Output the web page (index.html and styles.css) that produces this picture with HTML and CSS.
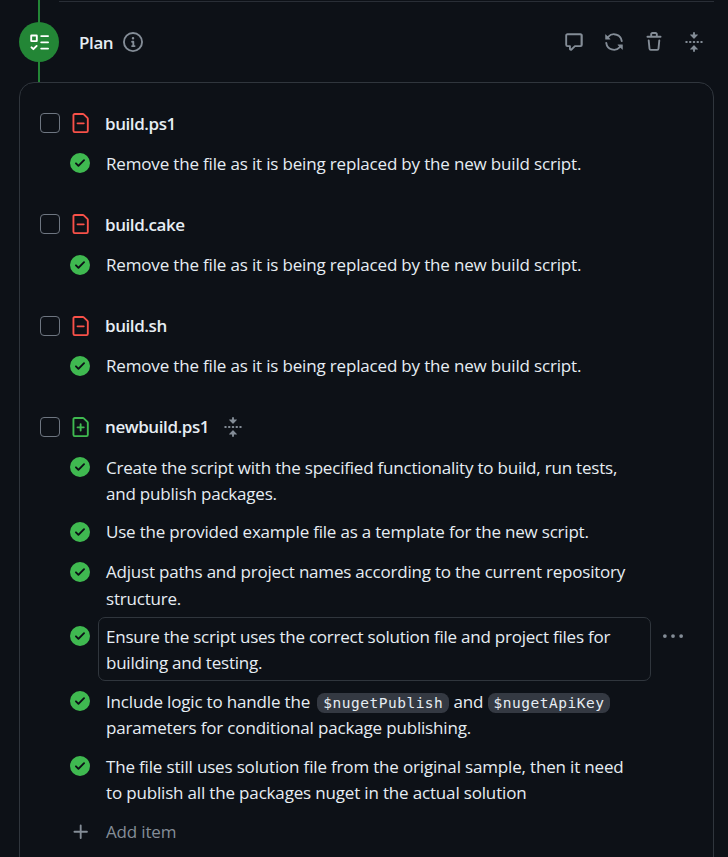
FILE: index.html
```html
<!DOCTYPE html>
<html lang="en">
<head>
<meta charset="utf-8">
<title>Plan</title>
<link rel="stylesheet" href="styles.css">
</head>
<body>
<svg class="sprite" aria-hidden="true">
  <symbol id="tasklist" viewBox="0 0 16 16"><path d="M2 2h4a1 1 0 0 1 1 1v4a1 1 0 0 1-1 1H2a1 1 0 0 1-1-1V3a1 1 0 0 1 1-1Zm4.655 8.595a.75.75 0 0 1 0 1.06L4.03 14.28a.75.75 0 0 1-1.06 0l-1.5-1.5a.749.749 0 0 1 .326-1.275.749.749 0 0 1 .734.215l.97.97 2.095-2.095a.75.75 0 0 1 1.06 0ZM9.75 2.5h5.5a.75.75 0 0 1 0 1.5h-5.5a.75.75 0 0 1 0-1.5Zm0 5h5.5a.75.75 0 0 1 0 1.5h-5.5a.75.75 0 0 1 0-1.5Zm0 5h5.5a.75.75 0 0 1 0 1.5h-5.5a.75.75 0 0 1 0-1.5Zm-7.25-9v3h3v-3Z"/></symbol>
  <symbol id="info" viewBox="0 0 16 16"><path d="M0 8a8 8 0 1 1 16 0A8 8 0 0 1 0 8Zm8-6.5a6.5 6.5 0 1 0 0 13 6.5 6.5 0 0 0 0-13ZM6.5 7.75A.75.75 0 0 1 7.25 7h1a.75.75 0 0 1 .75.75v2.75h.25a.75.75 0 0 1 0 1.5h-2a.75.75 0 0 1 0-1.5h.25v-2h-.25a.75.75 0 0 1-.75-.75ZM8 6a1 1 0 1 1 0-2 1 1 0 0 1 0 2Z"/></symbol>
  <symbol id="comment" viewBox="0 0 16 16"><path d="M1 2.75C1 1.784 1.784 1 2.75 1h10.5c.966 0 1.75.784 1.75 1.75v7.5A1.75 1.75 0 0 1 13.25 12H9.06l-2.573 2.573A1.458 1.458 0 0 1 4 13.543V12H2.75A1.75 1.75 0 0 1 1 10.25Zm1.75-.25a.25.25 0 0 0-.25.25v7.5c0 .138.112.25.25.25h2a.75.75 0 0 1 .75.75v2.19l2.72-2.72a.749.749 0 0 1 .53-.22h4.25a.25.25 0 0 0 .25-.25v-7.5a.25.25 0 0 0-.25-.25Z"/></symbol>
  <symbol id="sync" viewBox="0 0 16 16"><path d="M1.705 8.005a.75.75 0 0 1 .834.656 5.5 5.5 0 0 0 9.592 2.97l-1.204-1.204a.25.25 0 0 1 .177-.427h3.646a.25.25 0 0 1 .25.25v3.646a.25.25 0 0 1-.427.177l-1.38-1.38A7.002 7.002 0 0 1 1.05 8.84a.75.75 0 0 1 .656-.834ZM8 2.5a5.487 5.487 0 0 0-4.131 1.869l1.204 1.204A.25.25 0 0 1 4.896 6H1.25A.25.25 0 0 1 1 5.75V2.104a.25.25 0 0 1 .427-.177l1.38 1.38A7.002 7.002 0 0 1 14.95 7.16a.75.75 0 0 1-1.49.178A5.5 5.5 0 0 0 8 2.5Z"/></symbol>
  <symbol id="trash" viewBox="0 0 16 16"><path d="M11 1.75V3h2.25a.75.75 0 0 1 0 1.5H2.75a.75.75 0 0 1 0-1.5H5V1.75C5 .784 5.784 0 6.75 0h2.5C10.216 0 11 .784 11 1.75ZM4.496 6.675l.66 6.6a.25.25 0 0 0 .249.225h5.19a.25.25 0 0 0 .249-.225l.66-6.6a.75.75 0 0 1 1.492.149l-.66 6.6A1.748 1.748 0 0 1 10.595 15h-5.19a1.75 1.75 0 0 1-1.741-1.575l-.66-6.6a.75.75 0 1 1 1.492-.15ZM6.5 1.75V3h3V1.75a.25.25 0 0 0-.25-.25h-2.5a.25.25 0 0 0-.25.25Z"/></symbol>
  <symbol id="fold" viewBox="0 0 16 16"><path d="M10.896 2H8.75V.75a.75.75 0 0 0-1.5 0V2H5.104a.25.25 0 0 0-.177.427l2.896 2.896a.25.25 0 0 0 .354 0l2.896-2.896A.25.25 0 0 0 10.896 2ZM8.75 15.25a.75.75 0 0 1-1.5 0V14H5.104a.25.25 0 0 1-.177-.427l2.896-2.896a.25.25 0 0 1 .354 0l2.896 2.896a.25.25 0 0 1-.177.427H8.75v1.25Zm-6.5-6.5a.75.75 0 0 0 0-1.5h-.5a.75.75 0 0 0 0 1.5h.5ZM6 8a.75.75 0 0 1-.75.75h-.5a.75.75 0 0 1 0-1.5h.5A.75.75 0 0 1 6 8Zm2.25.75a.75.75 0 0 0 0-1.5h-.5a.75.75 0 0 0 0 1.5h.5ZM12 8a.75.75 0 0 1-.75.75h-.5a.75.75 0 0 1 0-1.5h.5A.75.75 0 0 1 12 8Zm2.25.75a.75.75 0 0 0 0-1.5h-.5a.75.75 0 0 0 0 1.5h.5Z"/></symbol>
  <symbol id="done" viewBox="0 0 16 16"><path d="M8 16A8 8 0 1 1 8 0a8 8 0 0 1 0 16Zm3.78-9.72a.751.751 0 0 0-.018-1.042.751.751 0 0 0-1.042-.018L6.75 9.19 5.28 7.72a.751.751 0 0 0-1.042.018.751.751 0 0 0-.018 1.042l2 2a.75.75 0 0 0 1.06 0Z"/></symbol>
  <symbol id="sheet" viewBox="0 0 16 16"><path d="M2 1.75C2 .784 2.784 0 3.75 0h6.586c.464 0 .909.184 1.237.513l2.914 2.914c.329.328.513.773.513 1.237v9.586A1.75 1.75 0 0 1 13.25 16h-9.5A1.75 1.75 0 0 1 2 14.25Zm1.75-.25a.25.25 0 0 0-.25.25v12.5c0 .138.112.25.25.25h9.5a.25.25 0 0 0 .25-.25V4.664a.25.25 0 0 0-.073-.177l-2.914-2.914a.25.25 0 0 0-.177-.073Z"/></symbol>
  <symbol id="removed" viewBox="0 0 16 16"><use href="#sheet"/><path d="M6 8.25h5" fill="none" stroke="currentColor" stroke-width="1.5" stroke-linecap="round"/></symbol>
  <symbol id="added" viewBox="0 0 16 16"><use href="#sheet"/><path d="M6 8.25h5M8.5 5.75v5" fill="none" stroke="currentColor" stroke-width="1.5" stroke-linecap="round"/></symbol>
  <symbol id="plus" viewBox="0 0 16 16"><path d="M7.75 2a.75.75 0 0 1 .75.75V7h4.25a.75.75 0 0 1 0 1.5H8.5v4.25a.75.75 0 0 1-1.5 0V8.5H2.75a.75.75 0 0 1 0-1.5H7V2.75A.75.75 0 0 1 7.75 2Z"/></symbol>
  <symbol id="dots" viewBox="0 0 16 16"><circle cx="1.5" cy="8" r="1.5"/><circle cx="8" cy="8" r="1.5"/><circle cx="14.5" cy="8" r="1.5"/></symbol>
</svg>

<div class="divider"></div>
<header class="head">
  <div class="rail"><span class="badge"><svg class="icon"><use href="#tasklist"/></svg></span></div>
  <h2 class="title">Plan</h2>
  <svg class="icon muted"><use href="#info"/></svg>
  <div class="actions">
    <svg class="icon"><use href="#comment"/></svg>
    <svg class="icon"><use href="#sync"/></svg>
    <svg class="icon"><use href="#trash"/></svg>
    <svg class="icon"><use href="#fold"/></svg>
  </div>
</header>

<main class="card">
  <section class="group">
    <div class="file"><span class="box"></span><svg class="icon red"><use href="#removed"/></svg><h3>build.ps1</h3></div>
    <div class="item"><svg class="icon green"><use href="#done"/></svg><p>Remove the file as it is being replaced by the new build script.</p></div>
  </section>
  <section class="group">
    <div class="file"><span class="box"></span><svg class="icon red"><use href="#removed"/></svg><h3>build.cake</h3></div>
    <div class="item"><svg class="icon green"><use href="#done"/></svg><p>Remove the file as it is being replaced by the new build script.</p></div>
  </section>
  <section class="group">
    <div class="file"><span class="box"></span><svg class="icon red"><use href="#removed"/></svg><h3>build.sh</h3></div>
    <div class="item"><svg class="icon green"><use href="#done"/></svg><p>Remove the file as it is being replaced by the new build script.</p></div>
  </section>
  <section class="group">
    <div class="file"><span class="box"></span><svg class="icon green"><use href="#added"/></svg><h3>newbuild.ps1</h3><svg class="icon muted"><use href="#fold"/></svg></div>
    <div class="item tight"><svg class="icon green"><use href="#done"/></svg><p>Create the script with the specified functionality to build, run tests,<br>and publish packages.</p></div>
    <div class="item tight"><svg class="icon green"><use href="#done"/></svg><p>Use the provided example file as a template for the new script.</p></div>
    <div class="item tight"><svg class="icon green"><use href="#done"/></svg><p>Adjust paths and project names according to the current repository<br>structure.</p></div>
    <div class="item tight active"><svg class="icon green"><use href="#done"/></svg><p>Ensure the script uses the correct solution file and project files for<br>building and testing.</p><svg class="icon muted more"><use href="#dots"/></svg></div>
    <div class="item coded"><svg class="icon green"><use href="#done"/></svg><p>Include logic to handle the <code class="first">$nugetPublish</code> and <code>$nugetApiKey</code><br>parameters for conditional package publishing.</p></div>
    <div class="item"><svg class="icon green"><use href="#done"/></svg><p>The file still uses solution file from the original sample, then it need<br>to publish all the packages nuget in the actual solution</p></div>
    <div class="item add"><svg class="icon"><use href="#plus"/></svg><p>Add item</p></div>
  </section>
</main>
</body>
</html>
```
FILE: styles.css
```css
* { box-sizing: border-box; }
html { background: #0d1117; }
body {
  margin: 0;
  height: 857px;
  overflow: hidden;
  display: flex;
  flex-direction: column;
  background: #0d1117;
  color: #e6edf3;
  font-family: "Open Sans", "Noto Sans", sans-serif;
  font-size: 17px;
  line-height: 26.25px;
  letter-spacing: -0.17px;
}
h2, h3, p { margin: 0; }
.sprite { position: absolute; width: 0; height: 0; }
.icon { width: 20px; height: 20px; flex: none; fill: currentColor; overflow: visible; }
.muted { color: #848d97; }
.red { color: #f85149; }
.green { color: #3fb950; }

.divider { flex: none; height: 2px; margin: 0 14px 0 59px; border-bottom: 1px solid #292e36; }
.head {
  flex: none;
  height: 82px;
  margin-top: -2px;
  padding: 2px 24px 0 19px;
  display: flex;
  align-items: center;
}
.rail {
  width: 40px;
  height: 82px;
  margin: -2px 20px 0 0;
  display: flex;
  align-items: center;
  justify-content: center;
  background: linear-gradient(#238636, #238636) 19px 0 / 2px 100% no-repeat;
}
.badge {
  width: 40px;
  height: 40px;
  margin-top: 2px;
  border-radius: 50%;
  background: #238636;
  color: #fff;
  display: flex;
  align-items: center;
  justify-content: center;
}
.title { font-size: 17px; font-weight: 600; margin: 2px 10px 0 0; letter-spacing: -0.4px; }
.actions { margin-left: auto; display: flex; gap: 20px; color: #848d97; }

.card {
  flex: none;
  height: 800px;
  margin: 0 14px 0 19px;
  padding: 19.9px 0 0 20px;
  border: 1px solid #30363d;
  border-radius: 15px;
}
.group { margin-bottom: 20.75px; }
.file { height: 40.5px; display: flex; align-items: center; }
.file h3 { font-size: 17px; font-weight: 600; margin: 1px 14px 0 15px; letter-spacing: -0.42px; }
.box { width: 20px; height: 20px; margin-right: 10px; border: 1px solid #6e7681; border-radius: 4px; }
.item { min-height: 40px; padding-left: 30px; display: flex; align-items: flex-start; }
.item > .icon { margin-top: 9.9px; }
.item p {
  width: 553px;
  height: 64.7px;
  margin-left: 8px;
  padding: 6.6px 7px 0;
  border: 1px solid transparent;
  border-radius: 7px;
  white-space: nowrap;
}
.item p:not(:has(br)) { height: 40px; }
.tight { letter-spacing: -0.205px; }
.active p { border-color: #30363d; }
.active { letter-spacing: -0.23px; }
.item.coded p { height: 65.4px; }
.item .more { margin-left: 12px; }
.add, .add p { color: #848d97; }
.add .icon { margin: 11.2px -1px 0 1px; }
.add p { padding-top: 7.2px; }
code {
  padding: 2px 6px;
  border-radius: 7.5px;
  background: #343942;
  font: 14.5px/16px "DejaVu Sans Mono", monospace;
  letter-spacing: 0.5px;
}
.first { margin-left: 3px; }
```
